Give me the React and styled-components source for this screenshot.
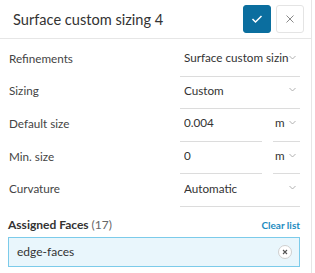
import React from 'react';
import styled, { createGlobalStyle } from 'styled-components';

const GlobalStyle = createGlobalStyle`
  body {
    margin: 0;
    background: #ffffff;
    font-family: Lato, "Open Sans", sans-serif;
    color: #333;
  }
`

const Panel = styled.div`
  width: 311px;
  height: 273px;
  border-right: 1px solid #e6e6e6;
  background: #fff;
  box-sizing: content-box;
  overflow: hidden;
`

const Header = styled.div`
  display: flex;
  align-items: center;
  height: 38px;
  padding: 0 7px 0 13px;
  border-bottom: 1px solid #e6e6e6;
`

const Title = styled.div`
  flex: 1;
  font-size: 14.6px;
  color: #333;
  padding-top: 1px;
`

const IconButton = styled.button`
  width: 28px;
  height: 28px;
  margin-left: ${p => p.gap || 0}px;
  border-radius: 3px;
  border: 1px solid ${p => p.primary ? '#0a6f9e' : '#e4e4e4'};
  background: ${p => p.primary ? '#0b6e9f' : '#fff'};
  display: flex;
  align-items: center;
  justify-content: center;
  padding: 0;
`

const Body = styled.div`
  padding: 5px 11px 0 8px;
`

const Row = styled.div`
  display: flex;
  align-items: stretch;
  height: 32.6px;
`

const Label = styled.div`
  flex: 1;
  display: flex;
  align-items: center;
  padding: 0 0 5px 1px;
  font-size: 11.7px;
  color: #444;
`

const Field = styled.div`
  width: ${p => p.width}px;
  margin-left: ${p => p.gap || 0}px;
  box-sizing: border-box;
  border-bottom: 1px solid #dcdcdc;
  display: flex;
  align-items: center;
  font-size: 11.7px;
  color: #333;
  padding: 0 4px 5px ${p => p.pad ?? 4}px;
`

const FieldText = styled.span`
  flex: 1;
  white-space: nowrap;
  overflow: hidden;
`

const SectionHead = styled.div`
  display: flex;
  align-items: center;
  justify-content: space-between;
  margin-top: 8px;
  height: 20px;
`

const SectionTitle = styled.div`
  font-size: 12px;
  font-weight: 700;
  color: #333;
`

const Count = styled.span`
  font-weight: 400;
  color: #666;
`

const ClearLink = styled.a`
  font-size: 10px;
  color: #1c8bbf;
  font-weight: 700;
`

const Chip = styled.div`
  margin-top: 2px;
  height: 30px;
  box-sizing: border-box;
  border: 1px solid #7ccbea;
  background: #e9f6fc;
  display: flex;
  align-items: center;
  padding: 0 7px 0 8px;
  font-size: 12px;
  color: #333;
`

const RemoveBtn = styled.span`
  width: 12px;
  height: 12px;
  border-radius: 50%;
  border: 1px solid #cfcfcf;
  background: #fff;
  display: flex;
  align-items: center;
  justify-content: center;
`

const Caret = () => (
  <svg width="7" height="5" viewBox="0 0 7 5">
    <path d="M0.5 1 L3.5 4 L6.5 1" fill="none" stroke="#a8a8a8" strokeWidth="0.9" />
  </svg>
)

const Select = ({ width, gap, pad, children }) => (
  <Field width={width} gap={gap} pad={pad}>
    <FieldText>{children}</FieldText>
    <Caret />
  </Field>
)

export default function App() {
  return (
    <>
      <GlobalStyle />
      <Panel>
        <Header>
          <Title>Surface custom sizing 4</Title>
          <IconButton primary>
            <svg width="12" height="10" viewBox="0 0 12 10">
              <path d="M1.5 5 L4.5 8 L10.5 2" fill="none" stroke="#fff" strokeWidth="1.5" />
            </svg>
          </IconButton>
          <IconButton gap={5}>
            <svg width="10" height="10" viewBox="0 0 10 10">
              <path d="M1.5 1.5 L8.5 8.5 M8.5 1.5 L1.5 8.5" stroke="#8a8a8a" strokeWidth="1" />
            </svg>
          </IconButton>
        </Header>
        <Body>
          <Row>
            <Label>Refinements</Label>
            <Select width={120}>Surface custom sizin</Select>
          </Row>
          <Row>
            <Label>Sizing</Label>
            <Select width={120}>Custom</Select>
          </Row>
          <Row>
            <Label>Default size</Label>
            <Field width={82}><FieldText>0.004</FieldText></Field>
            <Select width={27} gap={11} pad={2}>m</Select>
          </Row>
          <Row>
            <Label>Min. size</Label>
            <Field width={82}><FieldText>0</FieldText></Field>
            <Select width={27} gap={11} pad={2}>m</Select>
          </Row>
          <Row>
            <Label>Curvature</Label>
            <Select width={120}>Automatic</Select>
          </Row>
          <SectionHead>
            <SectionTitle>Assigned Faces <Count>(17)</Count></SectionTitle>
            <ClearLink>Clear list</ClearLink>
          </SectionHead>
          <Chip>
            <FieldText>edge-faces</FieldText>
            <RemoveBtn>
              <svg width="6" height="6" viewBox="0 0 6 6">
                <path d="M1 1 L5 5 M5 1 L1 5" stroke="#555" strokeWidth="1.1" />
              </svg>
            </RemoveBtn>
          </Chip>
        </Body>
      </Panel>
    </>
  )
}
